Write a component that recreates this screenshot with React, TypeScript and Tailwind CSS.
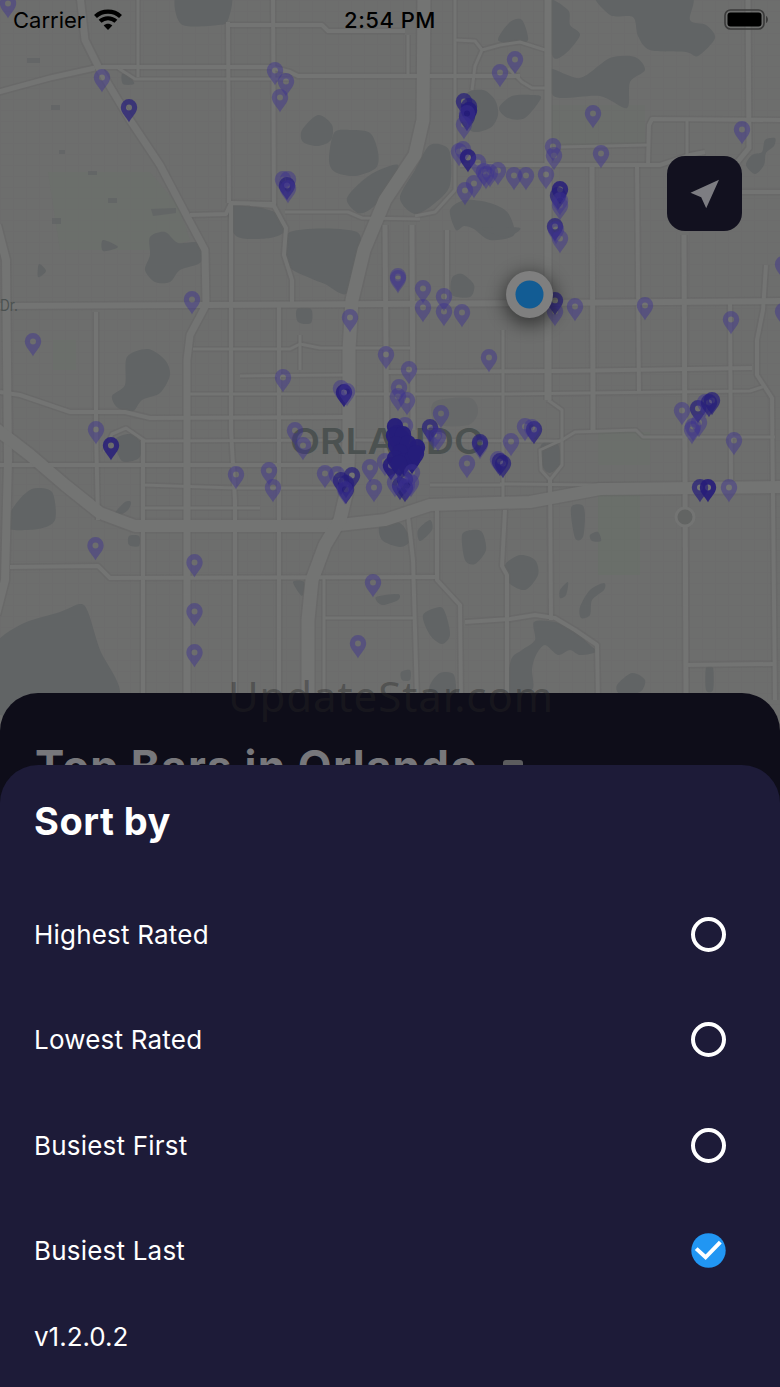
const lakes: number[][] = [
  [178, -8, 229, -8, 228, 20, 218, 25, 181, 24],
  [302, 130, 318, 115, 332, 125, 331, 140, 318, 146, 303, 142],
  [334, 133, 350, 130, 370, 133, 378, 152, 376, 168, 355, 176, 335, 172, 329, 160],
  [347, 198, 370, 175, 398, 165, 388, 190, 372, 208, 358, 213],
  [430, 145, 449, 150, 450, 185, 435, 203, 415, 214, 400, 198, 415, 170],
  [450, 210, 465, 200, 490, 203, 508, 213, 514, 235, 490, 240, 474, 229, 464, 226, 456, 230],
  [228, 206, 245, 206, 262, 208, 280, 215, 286, 230, 270, 238, 236, 236],
  [290, 232, 357, 232, 355, 265, 346, 294, 325, 284, 310, 278, 288, 265],
  [466, 95, 483, 90, 495, 100, 498, 115, 490, 128, 470, 130],
  [499, 108, 512, 96, 532, 95, 541, 98, 525, 118, 508, 118],
  [498, 40, 510, 22, 522, 20, 528, 40, 515, 43],
  [598, -8, 610, 15, 633, 17, 638, 36, 650, 50, 686, 52, 698, 56, 715, 38, 706, 25, 690, 20, 688, -8],
  [545, 0, 568, 10, 570, 25, 580, 35, 565, 54, 552, 55],
  [550, 69, 580, 78, 610, 58, 635, 57, 645, 70, 630, 82, 627, 108, 600, 96, 560, 98, 550, 90],
  [746, 165, 752, 155, 762, 152, 765, 140, 775, 138, 774, 146, 766, 153, 764, 165, 755, 174],
  [150, 237, 165, 232, 178, 243, 198, 243, 201, 262, 180, 270, 170, 282, 155, 282, 145, 270, 150, 255],
  [127, 357, 148, 349, 165, 360, 170, 375, 160, 393, 142, 400, 133, 411, 118, 408, 112, 396, 125, 385],
  [115, 440, 130, 434, 141, 443, 139, 458, 122, 461],
  [452, 278, 462, 274, 474, 285, 470, 297, 452, 295],
  [482, 228, 505, 237, 520, 228],
  [5, 528, 15, 505, 32, 489, 52, 492, 55, 520, 38, 529],
  [114, 514, 125, 502, 131, 502, 128, 510, 118, 516],
  [-8, 650, 20, 625, 60, 612, 80, 604, 88, 612, 100, 650, 119, 696, 60, 720, -8, 710],
  [380, 525, 400, 523, 410, 540, 400, 547, 382, 540],
  [418, 530, 430, 520, 432, 530, 420, 541],
  [462, 535, 472, 530, 482, 532, 486, 550, 475, 564, 465, 560],
  [423, 615, 440, 607, 446, 615, 450, 635, 442, 644, 430, 635],
  [376, 597, 398, 594, 398, 600, 382, 605],
  [430, 685, 440, 673, 454, 675, 454, 700, 430, 700],
  [505, 565, 520, 555, 535, 560, 538, 575, 525, 590, 508, 582],
  [293, 582, 304, 582, 302, 596],
  [401, 672, 410, 670, 410, 680, 402, 680],
  [534, 622, 555, 622, 575, 632, 590, 645, 596, 652, 580, 655, 570, 650, 558, 655, 545, 645, 536, 655, 532, 669, 532, 690, 508, 694, 511, 660, 522, 650, 535, 640],
  [571, 508, 582, 505, 585, 515, 583, 537, 575, 538],
  [590, 535, 598, 532, 601, 541, 592, 541],
  [560, 590, 568, 582, 566, 595, 560, 598],
  [590, 590, 604, 583, 604, 590, 592, 600, 590, 615, 581, 618, 580, 607],
  [617, 685, 632, 673, 645, 680, 640, 692, 620, 694],
  [706, 668, 713, 668, 713, 690, 706, 690],
  [541, 445, 556, 440, 561, 462, 550, 473, 542, 465],
  [297, 309, 311, 309, 311, 323, 298, 322],
  [103, 240, 118, 247, 103, 251],
  [39, 264, 46, 271, 38, 277],
  [122, 74, 130, 77, 134, 84, 123, 84],
  [129, 536, 139, 536, 139, 546, 129, 545],
];

// first value is the road width, the rest are x,y pairs
const roads: number[][] = [
  [4, 95, 67, 270, 67, 290, 72, 298, 76, 520, 76],
  [3, 118, 68, 135, 79, 290, 79],
  [3, 138, -5, 138, 77],
  [4, 228, 22, 229, 203],
  [4, 228, 25, 322, 25, 328, 31, 405, 31],
  [4, 273, -5, 274, 205],
  [3, 408, 35, 408, 76],
  [3, 455, -5, 455, 190, 435, 212, 415, 216],
  [3, 455, 40, 475, 41, 482, 50, 475, 66, 472, 90],
  [3, 482, 50, 500, 45, 520, 42, 545, 50],
  [3, 508, 68, 522, 82, 532, 88, 548, 88],
  [4, 190, 215, 226, 214, 231, 203, 274, 204],
  [4, 250, 204, 274, 206, 286, 228, 284, 255, 292, 280, 292, 302],
  [3, 285, 212, 348, 212, 362, 218, 420, 219],
  [4, 231, 205, 231, 430, 235, 500, 235, 700],
  [4, 96, 312, 96, 430, 98, 520],
  [4, 0, 392, 20, 395, 70, 412, 125, 412, 150, 418, 345, 417],
  [3, 104, 452, 112, 434, 126, 428, 145, 441, 350, 440],
  [4, 0, 465, 345, 465],
  [3, 193, 349, 290, 349, 300, 344, 320, 348, 410, 348],
  [3, 187, 394, 500, 394, 750, 391, 765, 386],
  [3, 240, 376, 345, 375],
  [4, 385, 372, 560, 371, 752, 368],
  [4, 143, 440, 143, 700],
  [3, 143, 485, 235, 488, 345, 488],
  [3, 143, 508, 260, 508],
  [4, 10, 567, 98, 566, 110, 578, 435, 577],
  [4, 437, 510, 437, 580, 460, 605, 461, 700],
  [4, 408, 515, 413, 560, 417, 700],
  [3, 325, 618, 415, 618],
  [3, 324, 577, 324, 700],
  [4, 279, 305, 279, 700],
  [3, 300, 335, 300, 370],
  [4, 505, 510, 502, 566, 507, 575, 507, 700],
  [4, 465, 622, 510, 619, 535, 615, 555, 618, 575, 630, 597, 645, 598, 700],
  [7, 548, -5, 548, 400],
  [3, 548, 400, 562, 410, 562, 440, 540, 450, 541, 470, 550, 480, 562, 465, 562, 440],
  [4, 550, 480, 551, 620],
  [5, 592, 165, 593, 395, 593, 432],
  [4, 637, 165, 639, 393],
  [5, 684, 235, 686, 700],
  [4, 730, 300, 731, 480],
  [4, 766, 265, 763, 310, 757, 340, 757, 375, 772, 398, 775, 700],
  [5, 748, -5, 749, 148, 735, 165],
  [4, 780, 120, 652, 119, 649, 125, 648, 164],
  [4, 460, 165, 660, 165, 690, 155, 705, 152],
  [3, 560, 147, 648, 145],
  [3, 687, 120, 687, 155],
  [4, 740, 192, 785, 192],
  [3, 562, 440, 575, 432, 636, 430, 643, 437, 775, 437],
  [3, 350, 440, 560, 441],
  [3, 500, 484, 600, 485, 780, 486],
  [4, 686, 665, 775, 664],
  [5, 385, 225, 387, 470],
  [5, 412, 225, 413, 430],
  [4, 447, 230, 447, 300],
  [3, 503, 330, 503, 500],
  [3, 430, 485, 502, 485],
  [6, 0, 306, 206, 305, 540, 303, 785, 301],
  [5, -5, 93, 50, 78, 95, 68],
  [7, 80, -5, 85, 40, 100, 70, 130, 120, 160, 165, 190, 222, 205, 250, 206, 305, 190, 335, 187, 360, 187, 700],
  [8, -3, 225, 6, 260, 8, 460, 5, 580, -4, 615],
  [12, -5, 428, 30, 455, 65, 485, 100, 513, 135, 526, 330, 526, 385, 520, 430, 505, 530, 502, 600, 489, 785, 487],
  [13, 424, -5, 423, 120, 415, 155, 385, 200, 364, 250, 352, 300, 349, 350, 349, 440, 347, 490, 340, 520, 325, 545, 312, 580, 308, 620, 308, 700],
];

// pin tip x, pin tip y, how many venues are stacked there
const pins: number[][] = [
  [8, 17, 1], [102, 91, 1], [129, 121, 2], [275, 84, 1], [286, 95, 1], [280, 111, 1],
  [283, 193, 1], [288, 193, 1], [287, 199, 2], [288, 202, 1], [500, 86, 1], [515, 73, 1],
  [464, 115, 2], [469, 120, 2], [469, 124, 5], [467, 130, 2], [467, 127, 1], [464, 138, 1],
  [459, 165, 1], [463, 163, 1], [468, 171, 3], [478, 176, 1], [486, 188, 1], [484, 185, 1], [490, 186, 1], [498, 184, 1],
  [514, 189, 1], [474, 197, 1], [465, 204, 1], [593, 127, 1], [742, 143, 1], [601, 167, 1],
  [553, 160, 1], [554, 169, 1], [526, 189, 1], [546, 188, 1], [560, 203, 3], [558, 209, 2], [560, 214, 1],
  [560, 219, 1], [555, 240, 2], [556, 243, 1], [560, 252, 1], [192, 313, 1], [33, 355, 1], [96, 443, 1],
  [111, 459, 3], [398, 292, 1], [398, 290, 1], [423, 302, 1], [423, 321, 1], [444, 310, 1],
  [444, 325, 1], [462, 326, 1], [350, 331, 1], [386, 368, 1], [409, 383, 1], [489, 371, 1], [283, 391, 1],
  [341, 402, 1], [344, 406, 4], [347, 405, 1], [399, 401, 1], [398, 410, 1], [407, 414, 1], [441, 427, 1],
  [405, 439, 1], [295, 444, 1], [303, 459, 1], [430, 441, 2], [434, 448, 1], [438, 450, 1], [480, 458, 1],
  [480, 456, 2], [511, 455, 1], [467, 477, 1], [498, 473, 1], [503, 477, 2], [500, 475, 2], [236, 488, 1],
  [269, 484, 1], [273, 501, 1], [325, 487, 1], [337, 488, 1], [341, 494, 2], [346, 497, 2], [352, 489, 2],
  [346, 503, 2], [345, 503, 1], [370, 481, 1], [374, 501, 1], [385, 475, 1], [395, 440, 5], [397, 447, 5],
  [394, 449, 5], [402, 452, 5], [403, 448, 5], [396, 458, 5], [405, 464, 5], [410, 468, 5], [417, 461, 5], [408, 457, 5],
  [400, 466, 5], [395, 472, 5], [391, 479, 4], [404, 475, 5], [412, 473, 5], [399, 477, 5], [416, 467, 5],
  [405, 493, 2], [400, 499, 2], [405, 501, 2], [407, 499, 1], [412, 486, 1], [395, 496, 1], [411, 496, 1],
  [525, 440, 1], [534, 443, 2], [532, 441, 1], [555, 314, 2],
  [555, 325, 1], [575, 320, 1], [645, 319, 1], [731, 333, 1], [783, 278, 1], [783, 325, 1], [682, 424, 1],
  [692, 443, 1], [698, 422, 2], [705, 416, 1], [712, 414, 2], [709, 416, 2], [699, 436, 1], [693, 440, 1], [734, 454, 1],
  [700, 501, 2], [708, 501, 4], [729, 501, 1], [95.5, 559, 1], [194.5, 576, 1], [194.5, 625, 1], [194.5, 666, 1],
  [373, 596, 1], [358, 657, 1],
];

const sortOptions = [
  { label: "Highest Rated", selected: false },
  { label: "Lowest Rated", selected: false },
  { label: "Busiest First", selected: false },
  { label: "Busiest Last", selected: true },
];

// Closed Catmull-Rom curve through the shore points
function shorePath(coords: number[]) {
  const n = coords.length / 2;
  const at = (i: number) => {
    const k = ((i % n) + n) % n;
    return [coords[k * 2], coords[k * 2 + 1]];
  };
  let d = `M${at(0).join(" ")}`;
  for (let i = 0; i < n; i++) {
    const [p0, p1, p2, p3] = [at(i - 1), at(i), at(i + 1), at(i + 2)];
    d += `C${p1[0] + (p2[0] - p0[0]) / 7} ${p1[1] + (p2[1] - p0[1]) / 7} ${p2[0] - (p3[0] - p1[0]) / 7} ${p2[1] - (p3[1] - p1[1]) / 7} ${p2[0]} ${p2[1]}`;
  }
  return d + "Z";
}

const PIN_BODY = "M0 0C-1.8 -4.2 -8.2 -9.2 -8.2 -15A8.2 8.2 0 1 1 8.2 -15C8.2 -9.2 1.8 -4.2 0 0Z";
const PIN_HOLE = "M0 -17.8A3 3 0 1 0 0 -11.8A3 3 0 1 0 0 -17.8Z";

function CityMap() {
  return (
    <svg className="absolute inset-x-0 top-0" width="780" height="780" viewBox="0 0 780 780">
      <defs>
        <pattern id="blocks" width="13" height="11" patternUnits="userSpaceOnUse">
          <path d="M0 .5H13M.5 0V11" stroke="#676867" strokeWidth="1" opacity=".25" />
        </pattern>
        <filter id="dotShadow" x="-60%" y="-60%" width="220%" height="220%">
          <feGaussianBlur stdDeviation="9" />
        </filter>
      </defs>
      <rect width="780" height="780" fill="#6d6e6d" />
      <rect width="780" height="780" fill="url(#blocks)" />
      <g fill="#696f69">
        <path d="M48 172H150L178 205L190 240L165 250H60Z" opacity=".5" />
        <path d="M598 495H640V575H598Z" opacity=".8" />
        <path d="M598 432H650V465H598Z" opacity=".5" />
        <path d="M550 105H645V145H550Z" opacity=".4" />
        <path d="M53 340H76V370H53Z" opacity=".5" />
      </g>
      <g fill="#616465">
        {lakes.map((lake, i) => (
          <path key={i} d={shorePath(lake)} />
        ))}
        <path d={shorePath([434, 402, 470, 398, 478, 412, 468, 425, 436, 424])} opacity=".5" />
        <path d="M27 58H40V63H27ZM51 105H60V110H51ZM59 150H65V154H59ZM88 171H97V175H88ZM108 198H117V203H108ZM52 218H61V224H52ZM151 209L176 208V213L153 216Z" opacity=".8" />
      </g>
      <g fill="none" strokeLinejoin="round" stroke="#636463">
        {roads.map(([w, ...pts], i) => (
          <polyline key={i} points={pts.join(" ")} strokeWidth={w + 3} opacity=".45" />
        ))}
      </g>
      <g fill="none" strokeLinejoin="round" stroke="#737473">
        {roads.map(([w, ...pts], i) => (
          <polyline key={i} points={pts.join(" ")} strokeWidth={w} />
        ))}
      </g>
      <circle cx="685" cy="517" r="9" fill="#626463" stroke="#737473" strokeWidth="3" />

      <g fill="#4b5150" fontFamily="Inter, sans-serif">
        <text x="290" y="454" fontSize="35" fontWeight="600" textLength="194" lengthAdjust="spacingAndGlyphs">ORLANDO</text>
        <text x="0" y="311" fontSize="16" textLength="18" lengthAdjust="spacingAndGlyphs">Dr.</text>
      </g>

      <g fillRule="evenodd" transform="translate(0 1.2)">
        {pins.map(([x, y, count], i) => (
          <path
            key={i}
            d={count > 4 ? PIN_BODY : PIN_BODY + PIN_HOLE}
            transform={`translate(${x} ${y})`}
            fill={count > 1 ? "#261d7a" : "#3d3290"}
            opacity={1 - 0.54 ** count}
          />
        ))}
      </g>

      <circle cx="530" cy="299" r="26" fill="#000" opacity=".5" filter="url(#dotShadow)" />
      <circle cx="529.5" cy="294.5" r="23.5" fill="#7f7f7f" />
      <circle cx="529.5" cy="294.5" r="14" fill="#125c94" />
    </svg>
  );
}

function StatusBar() {
  return (
    <div className="relative grid h-10 grid-cols-3 items-center pl-[13px] pr-[11px] text-[22px] text-black">
      <div className="flex items-center gap-[9px]">
        <span>Carrier</span>
        <svg width="28" height="22" viewBox="0 0 28 22" fill="none" stroke="currentColor" strokeWidth="4.2">
          <path d="M1.5 7.4C8.3 .9 19.7 .9 26.5 7.4" />
          <path d="M6.1 12.3C10.5 8.2 17.5 8.2 21.9 12.3" />
          <path d="M14 21L9.7 16.4C12.1 14.2 15.9 14.2 18.3 16.4Z" fill="currentColor" stroke="none" />
        </svg>
      </div>
      <span className="-ml-[2px] text-center font-medium tracking-[0.5px] whitespace-nowrap">2:54 PM</span>
      <svg className="justify-self-end" width="45" height="22" viewBox="0 0 45 22">
        <rect x="1" y="1" width="39" height="19" rx="5.5" fill="none" stroke="#3a3a3a" strokeWidth="1.6" />
        <rect x="3.5" y="3.5" width="34" height="14" rx="3" fill="#000" />
        <path d="M42 7C44.6 8.1 44.6 12.9 42 14Z" fill="#3a3a3a" />
      </svg>
    </div>
  );
}

function RadioMark({ selected }: { selected: boolean }) {
  if (!selected) {
    return <span className="size-[35px] rounded-full border-4 border-white" />;
  }
  return (
    <svg width="35" height="35" viewBox="0 0 35 35">
      <circle cx="17.5" cy="17.5" r="17.2" fill="#2196f3" />
      <path d="M5.2 15.6L14.6 24.3L29.3 9.2" fill="none" stroke="#fff" strokeWidth="4" />
    </svg>
  );
}

export default function App() {
  return (
    <main className="relative h-[1387px] w-[780px] overflow-hidden bg-[#6d6e6d] font-['Inter',sans-serif]">
      <CityMap />
      <StatusBar />

      <div className="relative flex h-[653px] justify-end pr-[38px] pt-[116px]">
        <button className="flex size-[75px] items-center justify-center rounded-[18px] bg-[#12111f]">
          <svg width="30" height="30" viewBox="0 0 30 30" fill="#7d7d82">
            <path d="M.5 13.8L29 .8L16.2 29.3L11.2 18.3Z" />
          </svg>
        </button>
      </div>

      <section className="relative flex h-[110px] items-start rounded-t-[38px] bg-[#0e0d19] pl-[35px] pt-[47px]">
        <h1 className="w-[468px] text-[44px] leading-[52px] font-bold tracking-[1.2px] whitespace-nowrap text-[#77777b]">Top Bars in Orlando</h1>
        <span className="mt-[20px] h-[12px] w-[20px] rounded-[3px] bg-[#5c5c5e]" />
      </section>

      <p className="absolute top-[669px] left-[228px] font-['Noto_Sans',sans-serif] text-[42px] leading-[54px] tracking-[0.9px] whitespace-nowrap text-[#262626]/40">
        UpdateStar.com
      </p>

      <section className="relative -mt-[38px] h-[622px] rounded-t-[38px] bg-[#1d1b38] pl-[34px] pr-[54px] pt-[32px] text-white">
        <h2 className="text-[38px] leading-[48px] font-bold tracking-[0.5px]">Sort by</h2>
        <ul className="mt-[36.5px]">
          {sortOptions.map((option) => (
            <li key={option.label} className="flex h-[105.5px] items-center justify-between text-[26px] tracking-[0.2px]">
              {option.label}
              <RadioMark selected={option.selected} />
            </li>
          ))}
        </ul>
        <p className="mt-[17px] text-[26px] leading-[32px]">v1.2.0.2</p>
      </section>
    </main>
  );
}
